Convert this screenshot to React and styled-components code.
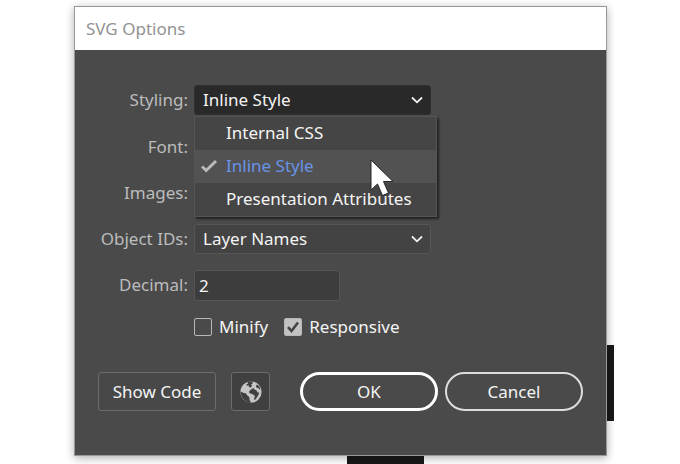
import React, { useState } from "react";
import styled, { createGlobalStyle, css } from "styled-components";

const GlobalStyle = createGlobalStyle`
  * { box-sizing: border-box; }
  body { margin: 0; background: #ffffff; }
  button, input, select { font: inherit; color: inherit; margin: 0; }
`;

const Desktop = styled.main`
  position: relative;
  isolation: isolate;
  overflow: hidden;
  margin: 0 66px;
  padding: 6px 7px 8px 8px;
  background: #ffffff;
  color: #f4f4f4;
  font: 17px/20px "Noto Sans", Tahoma, sans-serif;
`;

const ArtworkRight = styled.div`
  position: absolute;
  z-index: -1;
  right: 0;
  bottom: 43px;
  width: 16px;
  height: 76px;
  background: #191919;
`;

const ArtworkBottom = styled.div`
  position: absolute;
  z-index: -1;
  left: 281px;
  bottom: 0;
  width: 77px;
  height: 16px;
  background: #191919;
`;

const Dialog = styled.section`
  border: 1px solid #989898;
  background: #4a4a4a;
  box-shadow: 0 2px 9px rgba(0, 0, 0, 0.32);
`;

const TitleBar = styled.header`
  display: flex;
  align-items: center;
  height: 43px;
  padding: 0 11px;
  background: #ffffff;
`;

const Title = styled.h1`
  margin: 0;
  color: #929292;
  font: 400 17px/24px "Noto Sans", sans-serif;
`;

const Body = styled.form`
  padding: 34px 23px 44px;
`;

const Fields = styled.div`
  display: grid;
  grid-template-columns: 90px minmax(0, 1fr);
  grid-template-rows: 31px 31px 30px 30px 30px 22px;
  column-gap: 6px;
  row-gap: 16px;
  align-items: center;
`;

const FieldLabel = styled.label`
  justify-self: end;
  color: #bcbcbc;
  white-space: nowrap;
`;

const SelectWrap = styled.div`
  position: relative;
  display: flex;
  align-items: center;
  width: 237px;
  max-width: 100%;
`;

const Select = styled.select`
  appearance: none;
  width: 100%;
  height: 30px;
  padding: 0 32px 0 8px;
  border: 1px solid ${(p) => (p.$open ? "#303030" : "#565656")};
  border-radius: 3px;
  outline: none;
  background: ${(p) => (p.$open ? "#292929" : "#434343")};
`;

const Chevron = styled.svg`
  position: absolute;
  right: 8px;
  width: 12px;
  height: 8px;
  pointer-events: none;
`;

const Menu = styled.div`
  position: absolute;
  z-index: 2;
  top: 31px;
  left: 0;
  width: 243px;
  border: 1px solid #555555;
  background: #454545;
  box-shadow: 2px 2px 2px rgba(20, 20, 20, 0.75);
`;

const MenuItem = styled.button`
  display: grid;
  grid-template-columns: 31px 1fr;
  align-items: center;
  width: 100%;
  height: 33px;
  padding: 0;
  border: 0;
  outline: none;
  background: transparent;
  text-align: left;
  white-space: nowrap;
  ${(p) => p.$selected && css`
    background: #525252;
    color: #6893e6;
  `}
`;

const MenuLabel = styled.span`
  grid-column: 2;
`;

const MenuTick = styled.svg`
  width: 18px;
  height: 14px;
  margin-left: 5px;
`;

const Pointer = styled.svg`
  position: absolute;
  top: 42px;
  left: 175px;
  width: 24px;
  height: 40px;
  pointer-events: none;
`;

const NumberInput = styled.input`
  width: 146px;
  height: 31px;
  padding: 0 4px;
  border: 1px solid #555555;
  border-radius: 3px;
  outline: none;
  background: #3d3d3d;
`;

const Checks = styled.div`
  grid-column: 2;
  display: flex;
  gap: 16px;
`;

const CheckLabel = styled.label`
  display: flex;
  align-items: center;
  gap: 7px;
`;

const CheckSlot = styled.span`
  display: grid;
  place-items: center;
  > * { grid-area: 1 / 1; }
`;

const Checkbox = styled.input`
  appearance: none;
  width: 18px;
  height: 18px;
  border: 1px solid #b8b8b8;
  border-radius: 2px;
  &:checked { background: #c2c2c2; }
`;

const CheckMark = styled.svg`
  width: 14px;
  height: 14px;
  pointer-events: none;
`;

const Footer = styled.footer`
  display: flex;
  justify-content: space-between;
  margin-top: 34px;
`;

const ButtonGroup = styled.div`
  display: flex;
  gap: ${(p) => (p.$wide ? "15px" : "7px")};
`;

const ToolButton = styled.button`
  display: flex;
  align-items: center;
  justify-content: center;
  height: 39px;
  min-width: ${(p) => (p.$icon ? "39px" : "118px")};
  padding: 0 ${(p) => (p.$icon ? "0" : "12px")};
  border: 1px solid #6c6c6c;
  border-radius: 3px;
  background: ${(p) => (p.$icon ? "#404040" : "#484848")};
  white-space: nowrap;
`;

const PillButton = styled.button`
  width: 138px;
  height: 39px;
  padding: 0;
  border: ${(p) => (p.$primary ? "3px" : "2px")} solid ${(p) => (p.$primary ? "#ffffff" : "#dddddd")};
  border-radius: 20px;
  background: transparent;
`;

const STYLES = ["Internal CSS", "Inline Style", "Presentation Attributes"];

function Arrow() {
  return (
    <Chevron viewBox="0 0 12 8" aria-hidden="true">
      <path d="M1 1.5 6 6.3 11 1.5" fill="none" stroke="#f2f2f2" strokeWidth="1.8" />
    </Chevron>
  );
}

function Field({ id, label, children, menu, open }) {
  return (
    <>
      <FieldLabel htmlFor={id}>{label}</FieldLabel>
      <SelectWrap>
        <Select id={id} $open={open}>{children}</Select>
        <Arrow />
        {menu}
      </SelectWrap>
    </>
  );
}

function Globe() {
  return (
    <svg width="22" height="22" viewBox="0 0 22 22" aria-hidden="true">
      <circle cx="11" cy="11" r="10.6" fill="#c5c5c5" />
      <path
        d="M7.5.8 12.6.5l.2 1.8-1.6 1.3.9 1.4-1.7 1.7-1.4-.8-.4-1.6L6.8 5l-.3-1.7 1.6-.8z
           M.5 10.5l2.7 1.2 2.8.8 1.3 1.9 2 1.5.3 3.2 1.4 2.5C5.9 21.7.7 17.3.5 10.5z
           M9 10.4l2.3-2.2 2.3-1.2.9 1.6 1.8.6 1.4 2.2 1.5.1-1.1 3.1-2.6 3.9-1.6.2 1-3.6-2.2-1.8-2.3-.9-1.3-1z
           M16.6 3.5l2.1 1.2 1.8 3.4-1.1.5-1.3-1.8-1.3.3-.8-1.6z"
        fill="#404040"
      />
    </svg>
  );
}

function StyleMenu({ value, onChange }) {
  return (
    <Menu role="listbox" aria-label="Styling choices">
      {STYLES.map((item) => (
        <MenuItem
          type="button"
          role="option"
          key={item}
          aria-selected={item === value}
          $selected={item === value}
          onClick={() => onChange(item)}
        >
          {item === value && (
            <MenuTick viewBox="0 0 18 14" aria-hidden="true">
              <path d="M2 7.5 6.2 11.5 16 2" fill="none" stroke="#bbbbbb" strokeWidth="3" />
            </MenuTick>
          )}
          <MenuLabel>{item}</MenuLabel>
        </MenuItem>
      ))}
      <Pointer viewBox="0 0 24 40" aria-hidden="true">
        <path d="M1 1V31L7.5 25 12.5 36.5 18.5 34 13.5 22.5H23Z" fill="#ffffff" stroke="#272727" strokeWidth="1" />
      </Pointer>
    </Menu>
  );
}

export default function App() {
  const [style, setStyle] = useState("Inline Style");
  return (
    <>
      <GlobalStyle />
      <Desktop>
        <ArtworkRight />
        <ArtworkBottom />
        <Dialog role="dialog" aria-labelledby="title">
          <TitleBar><Title id="title">SVG Options</Title></TitleBar>
          <Body onSubmit={(event) => event.preventDefault()}>
            <Fields>
              <Field id="styling" label="Styling:" open menu={<StyleMenu value={style} onChange={setStyle} />}>
                <option>{style}</option>
              </Field>
              <Field id="font" label="Font:" />
              <Field id="images" label="Images:" />
              <Field id="ids" label="Object IDs:"><option>Layer Names</option></Field>
              <FieldLabel htmlFor="decimal">Decimal:</FieldLabel>
              <NumberInput id="decimal" inputMode="numeric" defaultValue="2" />
              <Checks>
                <CheckLabel>
                  <CheckSlot><Checkbox type="checkbox" /></CheckSlot>
                  Minify
                </CheckLabel>
                <CheckLabel>
                  <CheckSlot>
                    <Checkbox type="checkbox" defaultChecked />
                    <CheckMark viewBox="0 0 14 14" aria-hidden="true">
                      <path d="M2 7.2 5.5 11 12 2.5" fill="none" stroke="#444444" strokeWidth="2.6" />
                    </CheckMark>
                  </CheckSlot>
                  Responsive
                </CheckLabel>
              </Checks>
            </Fields>
            <Footer>
              <ButtonGroup $wide>
                <ToolButton type="button">Show Code</ToolButton>
                <ToolButton type="button" $icon aria-label="Preview in browser"><Globe /></ToolButton>
              </ButtonGroup>
              <ButtonGroup>
                <PillButton type="submit" $primary>OK</PillButton>
                <PillButton type="button">Cancel</PillButton>
              </ButtonGroup>
            </Footer>
          </Body>
        </Dialog>
      </Desktop>
    </>
  );
}
